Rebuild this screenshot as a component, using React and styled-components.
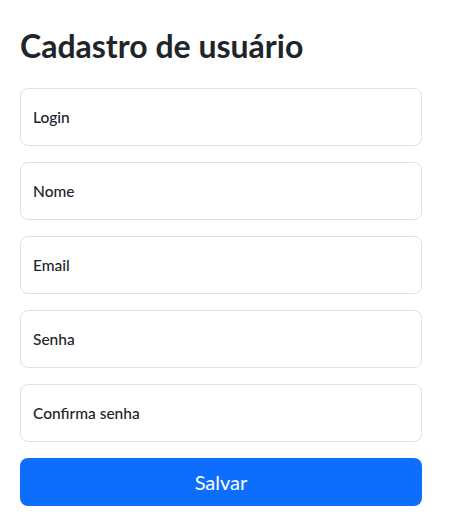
import React, {useState} from 'react';
import styled, {createGlobalStyle} from 'styled-components';

const GlobalStyle = createGlobalStyle`
  body {
    margin: 0;
    background: #fff;
    font-family: Lato, "Open Sans", sans-serif;
    color: #212529;
  }
`

const Page = styled.div`
  padding: 27px 28px 26px 20px;
`

const Title = styled.h1`
  margin: 0 0 23px;
  font-size: 32px;
  font-weight: 700;
  line-height: 1.2;
  color: #212529;
`

const Form = styled.form`
  display: flex;
  flex-direction: column;
  gap: 16px;
`

const Field = styled.input`
  box-sizing: border-box;
  width: 100%;
  height: 58px;
  padding: 0 12px;
  border: 1px solid #dee2e6;
  border-radius: 8px;
  background: #fff;
  font-family: Lato, "Open Sans", sans-serif;
  font-size: 15.5px;
  font-weight: 500;
  color: #212529;
  outline: none;

  &::placeholder {
    color: #212529;
    opacity: 1;
  }
`

const SaveButton = styled.button`
  height: 48px;
  border: none;
  border-radius: 8px;
  background: #0d6efd;
  color: #fff;
  font-family: Lato, "Open Sans", sans-serif;
  font-size: 20px;
  cursor: pointer;
`

const fields = [
  {name: 'login', label: 'Login', type: 'text'},
  {name: 'nome', label: 'Nome', type: 'text'},
  {name: 'email', label: 'Email', type: 'email'},
  {name: 'senha', label: 'Senha', type: 'password'},
  {name: 'confirma', label: 'Confirma senha', type: 'password'},
];

export default function App() {
  const [values, setValues] = useState({});

  return (
    <>
      <GlobalStyle/>
      <Page>
        <Title>Cadastro de usuário</Title>
        <Form onSubmit={evt => evt.preventDefault()}>
          {fields.map(f =>
            <Field
              key={f.name}
              type={f.type}
              placeholder={f.label}
              value={values[f.name] || ''}
              onChange={evt => setValues({...values, [f.name]: evt.target.value})}/>
          )}
          <SaveButton type="submit">Salvar</SaveButton>
        </Form>
      </Page>
    </>
  );
}
